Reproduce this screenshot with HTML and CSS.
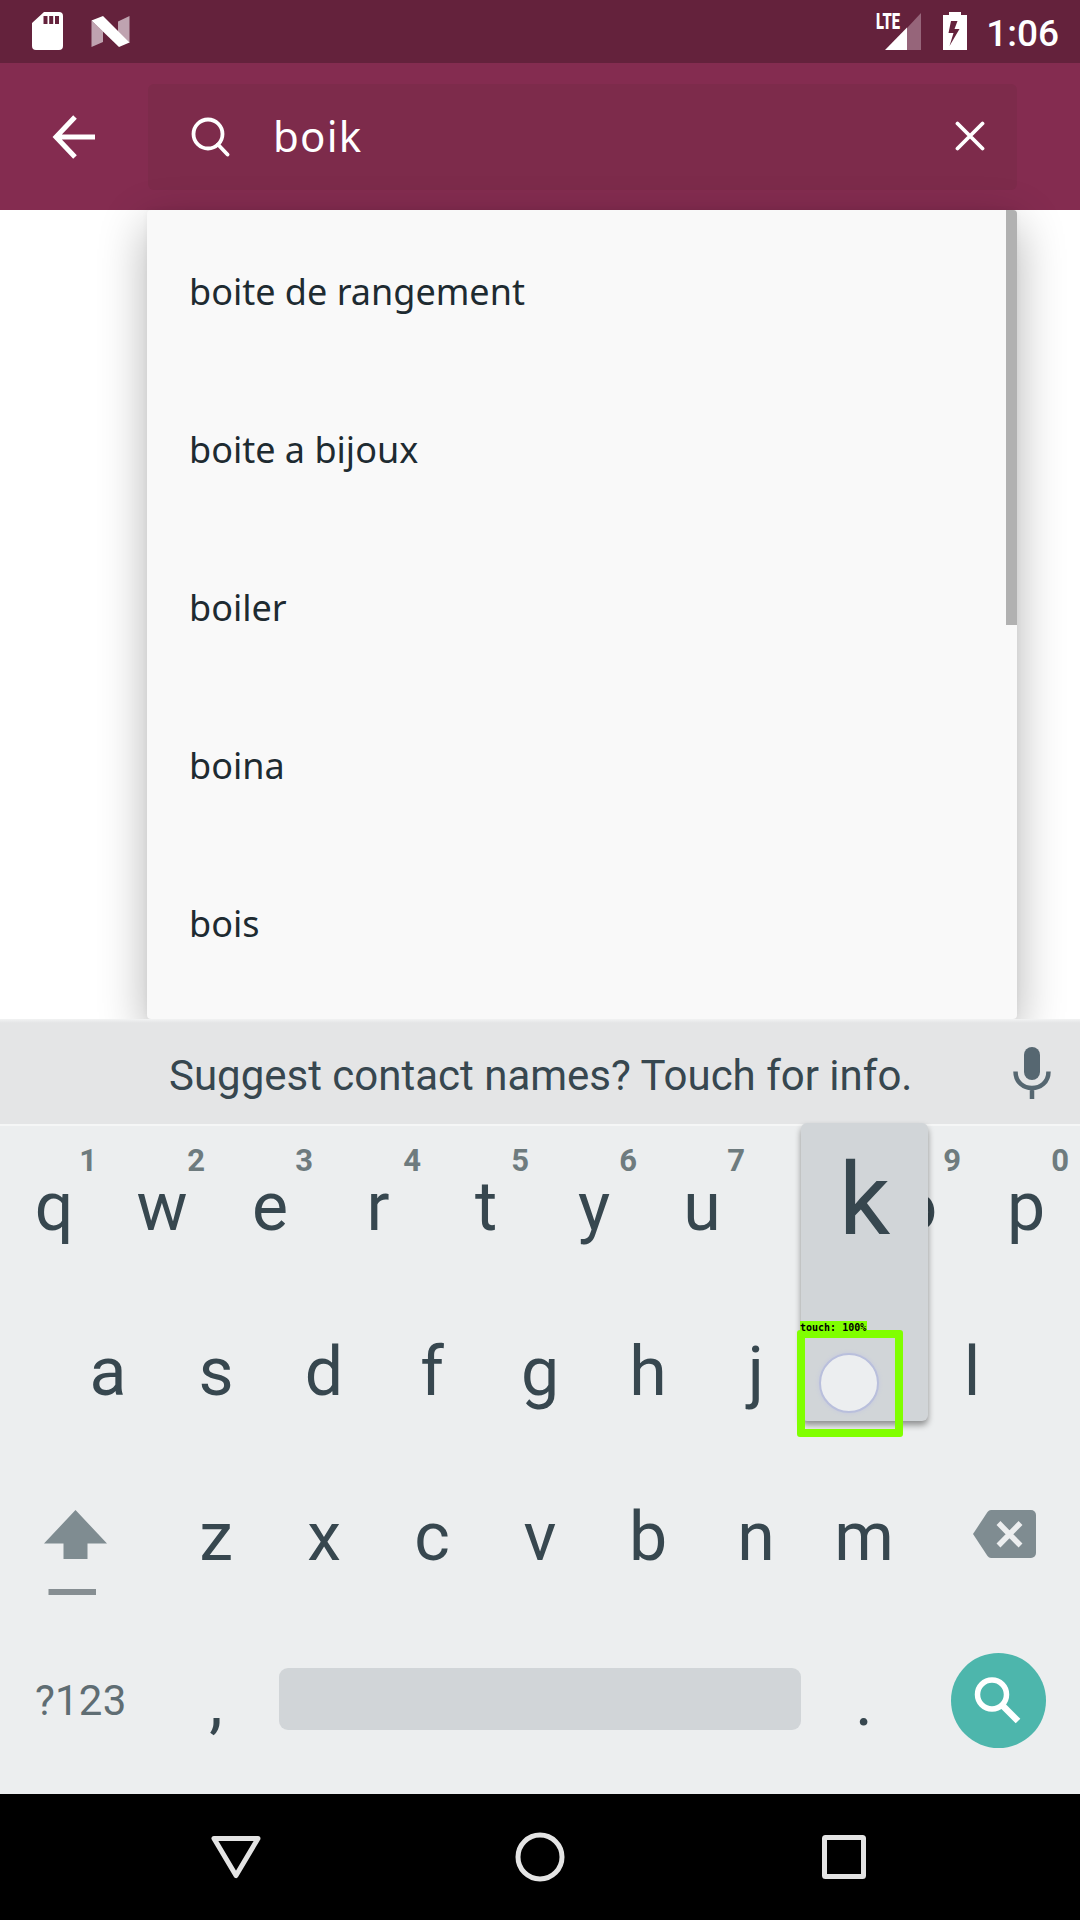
FILE: index.html
```html
<!DOCTYPE html>
<html lang="fr">
<head>
<meta charset="utf-8">
<title>boik</title>
<link rel="stylesheet" href="styles.css">
</head>
<body>
<div class="screen">
  <header class="status">
    <svg class="status-left" width="110" height="63" viewBox="0 0 110 63">
      <path fill="#fff" fill-rule="evenodd" d="M12 13h15a4 4 0 0 1 4 4v30a4 4 0 0 1-4 4H4a4 4 0 0 1-4-4V24zM11.500 17v8h4v-8zM17.200 17v8h4v-8zM23 17v8h4v-8z"/>
      <path fill="#bfa3b0" d="M59.500 21.500 71 32.500V43L59.500 48zM97.500 17v27L86 32.500V22.500z"/>
      <path fill="#fff" d="M59.500 21.500 71 17l26.500 26.500L87 48z"/>
    </svg>
    <div class="status-right">
      <svg width="96" height="63" viewBox="0 0 96 63">
        <text class="lte" x="0" y="29" textLength="24" lengthAdjust="spacingAndGlyphs">LTE</text>
        <path fill="#96657a" d="M45 13v37H31V28z"/>
        <path fill="#fff" d="M31 27.500V50H9z"/>
        <path fill="#fff" fill-rule="evenodd" d="M73 15V12h12v3h6v35H67V15zM75 21l-2.500 12h5l-4 13 10-17h-5l3-8z"/>
      </svg>
      <span class="clock">1:06</span>
    </div>
  </header>
  <div class="appbar">
    <svg class="back" width="44" height="44" viewBox="0 0 44 44"><path fill="none" stroke="#fff" stroke-width="5" d="M23 2 4 22l19 20M4 22h39"/></svg>
    <div class="field">
      <svg width="40" height="42" viewBox="0 0 40 42"><g fill="none" stroke="#fff" stroke-width="3.800" stroke-linecap="round"><circle cx="17" cy="19" r="14.500"/><path d="m27 29.500 9.500 10"/></g></svg>
      <span class="query">boik</span>
      <svg class="clear" width="30" height="30" viewBox="0 0 30 30"><path stroke="#fff" stroke-width="3.800" stroke-linecap="round" d="m2.500 2.500 25 25m0-25-25 25"/></svg>
    </div>
  </div>
  <main class="content">
    <ul class="suggestions">
      <li>boite de rangement</li>
      <li>boite a bijoux</li>
      <li>boiler</li>
      <li>boina</li>
      <li>bois</li>
    </ul>
  </main>
  <section class="keyboard">
    <div class="strip">
      <span>Suggest contact names? Touch for info.</span>
      <svg class="mic" width="38" height="52" viewBox="0 0 38 52"><rect x="11" y="0" width="16" height="33" rx="8" fill="#566771"/><path fill="none" stroke="#566771" stroke-width="4.500" d="M2.500 24.500c0 22 33 22 33 0M19 40v12"/></svg>
    </div>
    <div class="keys">
      <div class="row">
        <div class="key">q<i>1</i></div><div class="key">w<i>2</i></div><div class="key">e<i>3</i></div><div class="key">r<i>4</i></div><div class="key">t<i>5</i></div><div class="key">y<i>6</i></div><div class="key">u<i>7</i></div><div class="key"></div><div class="key">o<i>9</i></div><div class="key">p<i>0</i></div>
      </div>
      <div class="row">
        <div class="key">a</div><div class="key">s</div><div class="key">d</div><div class="key">f</div><div class="key">g</div><div class="key">h</div><div class="key">j</div><div class="key"></div><div class="key">l</div>
      </div>
      <div class="row">
        <div class="wide shift"><svg width="64" height="86" viewBox="0 0 64 86"><path fill="#7f8c91" d="M31.500 0 63 33.500H43.500V49H19.500V33.500H0z"/><path fill="#868e92" d="M4.500 79h47.500v6H4.500z"/></svg></div>
        <div class="key">z</div><div class="key">x</div><div class="key">c</div><div class="key">v</div><div class="key">b</div><div class="key">n</div><div class="key">m</div>
        <div class="wide delete"><svg width="63" height="48" viewBox="0 0 63 48"><path fill="#7f8c91" d="M18 0h40a5 5 0 0 1 5 5v38a5 5 0 0 1-5 5H18q-2 0-3.500-2L0 24 14.500 2Q16 0 18 0z"/><path stroke="#eceeef" stroke-width="5.500" d="m25.500 13 22 22.500m0-22.500-22 22.500"/></svg></div>
      </div>
      <div class="row">
        <div class="wide symbols">?123</div>
        <div class="key">,</div>
        <div class="space"></div>
        <div class="key">.</div>
        <div class="wide enter"><svg width="95" height="95" viewBox="0 0 95 95"><circle cx="47.500" cy="47.500" r="47.500" fill="#4db6ac"/><g fill="none" stroke="#fff" stroke-width="5.500"><circle cx="41" cy="41.500" r="14.500"/><path stroke-width="6.500" d="m52 53 15 15"/></g></svg></div>
      </div>
      <div class="preview">k</div>
      <div class="touch-box"><b>touch: 100%</b><div class="touch-dot"></div></div>
    </div>
  </section>
  <nav class="navbar">
    <svg width="50" height="50" viewBox="0 0 50 50"><path d="M3 6.500h44L25 43.500z"/></svg>
    <svg width="50" height="50" viewBox="0 0 50 50"><circle cx="25" cy="25" r="22"/></svg>
    <svg width="50" height="50" viewBox="0 0 50 50"><rect x="5.500" y="5.500" width="39" height="39" rx="1"/></svg>
  </nav>
</div>
</body>
</html>
```
FILE: styles.css
```css
* { box-sizing: border-box; }
body { margin: 0; font-family: Roboto, sans-serif; }
svg { display: block; flex: none; }
.screen { width: 1080px; height: 1920px; display: flex; flex-direction: column; overflow: hidden; background: #fff; }

.status { height: 63px; flex: none; background: #64223c; display: flex; justify-content: space-between; padding: 0 21px 0 32px; }
.status-left { margin-top: -1px; }
.status-right { display: flex; gap: 14px; }
.lte { font: 900 22px Roboto, sans-serif; fill: #fff; }
.clock { color: #fff; font-weight: 500; font-size: 37px; line-height: 67px; }

.appbar { height: 147px; flex: none; background: #842c50; display: flex; align-items: center; padding: 0 63px 0 52px; }
.back { margin: 0 52px 0 0; }
.field { width: 869px; height: 106px; background: #7d2b4b; border-radius: 6px; display: flex; align-items: center; padding: 0 32px 2px 43px; }
.query { color: #fff; font: 42px/58px "Noto Sans", sans-serif; margin-left: 42px; letter-spacing: 1.2px; }
.clear { margin-left: auto; }

.content { height: 809px; flex: none; padding: 0 63px 0 147px; }
.suggestions { list-style: none; margin: 0; padding: 3px 0 0 42px; height: 809px; border-radius: 4px; position: relative; color: #1e2b31;
  background: linear-gradient(#b1b1b1, #b1b1b1) right top / 11px 415px no-repeat, #f9f9f9;
  box-shadow: 0 16px 48px rgba(0, 0, 0, .3), 0 0 6px rgba(0, 0, 0, .04); }
.suggestions li { height: 158px; font: 36px/158px "Noto Sans", sans-serif; }

.keyboard { position: relative; flex: none; height: 775px; background: #eceeef; color: #37474f; }
.strip { height: 107px; background: linear-gradient(#f2f3f3, #e4e5e6 4px); border-bottom: 2px solid #f5f6f6; display: flex; justify-content: flex-end; align-items: center; font-size: 42px; padding: 3px 29px 0 0; }
.strip span { width: 740px; margin: 5px 104px 0 0; text-align: center; white-space: nowrap; }
.keys { position: relative; margin-top: -1px; }
.row { height: 165px; display: flex; justify-content: center; align-items: center; }
.key { position: relative; width: 108px; height: 165px; text-align: center; font-size: 68px; line-height: 165px; }
.key i { position: absolute; right: 11px; top: 18px; font: 700 31px/36px Roboto, sans-serif; color: #6e7b7e; }
.wide { width: 162px; display: flex; }
.shift { padding: 30px 0 0 44px; }
.delete { justify-content: flex-end; padding-right: 44px; margin-top: -8px; }
.symbols { padding-left: 35px; margin-top: -4px; font-size: 42px; letter-spacing: .2px; color: #5f6d73; }
.space { width: 522px; height: 62px; margin: -8px 9px 0; border-radius: 9px; background: #d1d5d8; }
.enter { padding-left: 33px; margin-top: -5px; }
.preview { position: absolute; left: 801px; top: -2px; width: 127px; height: 298px; border-radius: 6px; background: #d1d5d8; font-size: 101px; line-height: 154px; text-align: center; box-shadow: 0 4px 6px rgba(0, 0, 0, .4); }
.touch-box { position: absolute; left: 797px; top: 205px; width: 106px; height: 107px; border: 8px solid #80ff00; border-radius: 3px; }
.touch-box b { position: absolute; left: -5px; top: -17px; width: 67px; height: 12px; background: #80ff00; color: #000; font: 700 10px/13px "DejaVu Sans Mono", monospace; white-space: nowrap; }
.touch-dot { position: absolute; left: 14px; top: 15px; width: 60px; height: 60px; border-radius: 50%; background: #eceef0; border: 2px solid #b9bfdc; box-shadow: 0 0 4px #c5c9de; }

.navbar { flex: 1; background: #000; display: flex; justify-content: center; align-items: center; gap: 254px; }
.navbar svg { fill: none; stroke: #e4e4e4; stroke-width: 5; stroke-linejoin: round; }
```
